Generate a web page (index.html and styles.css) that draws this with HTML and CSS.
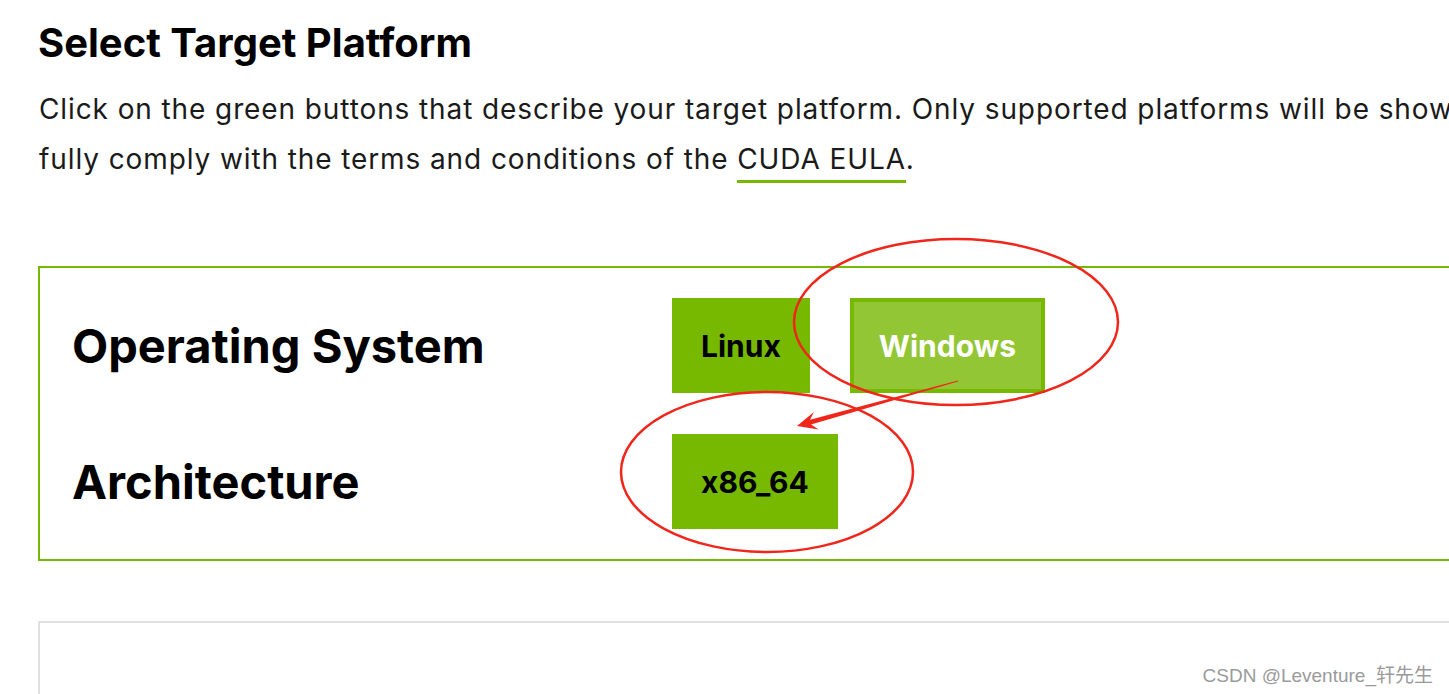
FILE: index.html
```html
<html lang="en"><head>
    <meta charset="UTF-8">
    <meta name="viewport" content="width=device-width, initial-scale=1.0">
    <title>Select Target Platform</title>

    <link rel="stylesheet" href="styles.css">
</head>

<body>
    <div class="page">
        <h2 class="title">Select Target Platform</h2>
        <p class="intro">Click on the green buttons that describe your target platform. Only supported platforms will be shown. By downloading and using the software, you agree to<br>fully comply with the terms and conditions of the <a href="#" class="eula">CUDA EULA</a>.</p>

        <div class="selector">
            <div class="row">
                <div class="row_label">Operating System</div>
                <div class="row_options">
                    <button class="opt">Linux</button>
                    <button class="opt active">Windows</button>
                </div>
            </div>
            <div class="row">
                <div class="row_label">Architecture</div>
                <div class="row_options">
                    <button class="opt">x86_64</button>
                </div>
            </div>
        </div>

        <div class="panel"></div>
    </div>

    <!-- red pen marks drawn over the screenshot -->
    <svg class="marks" width="1449" height="694" viewBox="0 0 1449 694">
        <ellipse cx="956" cy="322" rx="162" ry="83" fill="none" stroke="#f0261b" stroke-width="2.5"/>
        <ellipse cx="767" cy="472" rx="146" ry="80" fill="none" stroke="#f0261b" stroke-width="2.5"/>
        <polygon points="958,380.5 958,381.5 811,424.6 818.7,429.5 797,426 813.9,411.9 810,419.8" fill="#f0261b"/>
    </svg>

    <div class="watermark">CSDN @Leventure_轩先生</div>
</body>
</html>
```

FILE: styles.css
```css
body {
    margin: 0;
    background-color: #fff;
    overflow: hidden;
    font-family: Inter, "Noto Sans", sans-serif;
}

.page {
    width: 1560px;
    padding: 19px 0 0 38px;
}

.title {
    margin: 0;
    font-size: 40px;
    line-height: 48px;
    font-weight: 700;
    color: #000;
}

.intro {
    margin: 17px 0 0 1px;
    font-size: 28px;
    letter-spacing: 0.9px;
    line-height: 50px;
    color: #1a1a1a;
    white-space: nowrap;
}

.eula {
    color: #1a1a1a;
    text-decoration: none;
    border-bottom: 3px solid #76b900;
    padding-bottom: 4px;
}

.selector {
    margin-top: 82px;
    border: 2px solid #76b900;
    padding: 30px 0 30px 32px;
    display: flex;
    flex-direction: column;
    gap: 41px;
}

.row {
    display: grid;
    grid-template-columns: 600px 1fr;
    align-items: center;
}

.row_label {
    font-size: 47px;
    font-weight: 700;
    color: #000;
}

.row_options {
    display: flex;
    gap: 40px;
}

.opt {
    height: 95px;
    padding: 0 29px;
    border: none;
    background-color: #76b900;
    color: #000;
    font-family: Inter, "Liberation Sans", sans-serif;
    font-size: 30px;
    font-weight: 700;
}

.opt.active {
    background-color: #93c634;
    border: 4px solid #76b900;
    color: #fff;
    padding: 0 25px;
}

.panel {
    margin-top: 60px;
    height: 200px;
    border: 2px solid #e0e0e0;
    background-color: #fff;
}

.marks {
    position: absolute;
    left: 0;
    top: 0;
    pointer-events: none;
}

.watermark {
    position: absolute;
    right: 16px;
    bottom: 7px;
    font-family: "Liberation Sans", "Noto Sans CJK SC", sans-serif;
    font-size: 19px;
    color: #9a9a9a;
}
```
